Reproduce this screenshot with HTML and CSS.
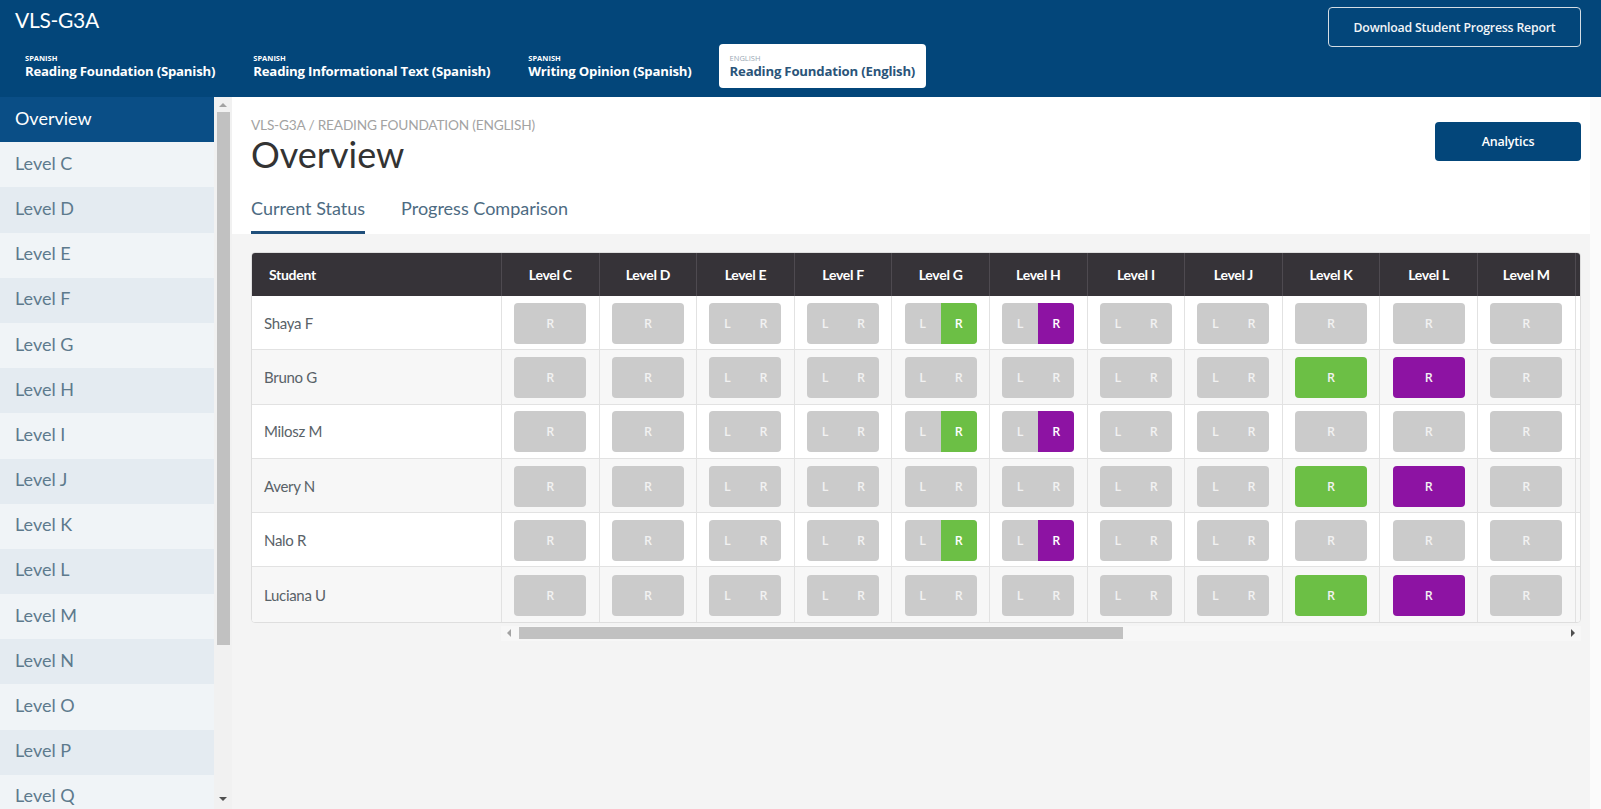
FILE: index.html
```html
<!DOCTYPE html>
<html lang="en">
<head>
<meta charset="utf-8">
<title>VLS-G3A Overview</title>
<link rel="stylesheet" href="styles.css">
</head>
<body>
<header class="topbar">
  <div class="topbar-left">
    <div class="app-title">VLS-G3A</div>
    <nav class="course-tabs">
      <a class="course-tab"><span class="lang">SPANISH</span><span class="course">Reading Foundation (Spanish)</span></a>
      <a class="course-tab"><span class="lang">SPANISH</span><span class="course">Reading Informational Text (Spanish)</span></a>
      <a class="course-tab"><span class="lang">SPANISH</span><span class="course">Writing Opinion (Spanish)</span></a>
      <a class="course-tab active"><span class="lang">ENGLISH</span><span class="course">Reading Foundation (English)</span></a>
    </nav>
  </div>
  <button class="btn-outline">Download Student Progress Report</button>
</header>

<div class="layout">
  <aside class="sidebar">
    <ul class="side-list">
      <li class="side-item active">Overview</li>
      <li class="side-item">Level C</li>
      <li class="side-item alt">Level D</li>
      <li class="side-item">Level E</li>
      <li class="side-item alt">Level F</li>
      <li class="side-item">Level G</li>
      <li class="side-item alt">Level H</li>
      <li class="side-item">Level I</li>
      <li class="side-item alt">Level J</li>
      <li class="side-item">Level K</li>
      <li class="side-item alt">Level L</li>
      <li class="side-item">Level M</li>
      <li class="side-item alt">Level N</li>
      <li class="side-item">Level O</li>
      <li class="side-item alt">Level P</li>
      <li class="side-item">Level Q</li>
    </ul>
  </aside>
  <div class="vscroll">
    <span class="arrow-up"></span>
    <span class="vthumb"></span>
    <span class="vspacer"></span>
    <span class="arrow-down"></span>
  </div>

  <main class="main">
    <section class="main-head">
      <div class="head-text">
        <div class="breadcrumb">VLS-G3A / READING FOUNDATION (ENGLISH)</div>
        <h1 class="page-title">Overview</h1>
        <div class="view-tabs">
          <span class="view-tab active">Current Status</span>
          <span class="view-tab">Progress Comparison</span>
        </div>
      </div>
      <button class="btn-primary">Analytics</button>
    </section>

    <section class="content">
      <div class="table-wrap">
        <div class="grid">
          <div class="row head">
            <div class="hcell student">Student</div>
            <div class="hcell">Level C</div>
            <div class="hcell">Level D</div>
            <div class="hcell">Level E</div>
            <div class="hcell">Level F</div>
            <div class="hcell">Level G</div>
            <div class="hcell">Level H</div>
            <div class="hcell">Level I</div>
            <div class="hcell">Level J</div>
            <div class="hcell">Level K</div>
            <div class="hcell">Level L</div>
            <div class="hcell">Level M</div>
            <div class="hcell"></div>
          </div>

          <div class="row">
            <div class="cell name">Shaya F</div>
            <div class="cell"><span class="pill"><i>R</i></span></div>
            <div class="cell"><span class="pill"><i>R</i></span></div>
            <div class="cell"><span class="pill"><i>L</i><i>R</i></span></div>
            <div class="cell"><span class="pill"><i>L</i><i>R</i></span></div>
            <div class="cell"><span class="pill"><i>L</i><i class="green">R</i></span></div>
            <div class="cell"><span class="pill"><i>L</i><i class="purple">R</i></span></div>
            <div class="cell"><span class="pill"><i>L</i><i>R</i></span></div>
            <div class="cell"><span class="pill"><i>L</i><i>R</i></span></div>
            <div class="cell"><span class="pill"><i>R</i></span></div>
            <div class="cell"><span class="pill"><i>R</i></span></div>
            <div class="cell"><span class="pill"><i>R</i></span></div>
            <div class="cell"><span class="pill"></span></div>
          </div>

          <div class="row even">
            <div class="cell name">Bruno G</div>
            <div class="cell"><span class="pill"><i>R</i></span></div>
            <div class="cell"><span class="pill"><i>R</i></span></div>
            <div class="cell"><span class="pill"><i>L</i><i>R</i></span></div>
            <div class="cell"><span class="pill"><i>L</i><i>R</i></span></div>
            <div class="cell"><span class="pill"><i>L</i><i>R</i></span></div>
            <div class="cell"><span class="pill"><i>L</i><i>R</i></span></div>
            <div class="cell"><span class="pill"><i>L</i><i>R</i></span></div>
            <div class="cell"><span class="pill"><i>L</i><i>R</i></span></div>
            <div class="cell"><span class="pill green"><i>R</i></span></div>
            <div class="cell"><span class="pill purple"><i>R</i></span></div>
            <div class="cell"><span class="pill"><i>R</i></span></div>
            <div class="cell"><span class="pill"></span></div>
          </div>

          <div class="row">
            <div class="cell name">Milosz M</div>
            <div class="cell"><span class="pill"><i>R</i></span></div>
            <div class="cell"><span class="pill"><i>R</i></span></div>
            <div class="cell"><span class="pill"><i>L</i><i>R</i></span></div>
            <div class="cell"><span class="pill"><i>L</i><i>R</i></span></div>
            <div class="cell"><span class="pill"><i>L</i><i class="green">R</i></span></div>
            <div class="cell"><span class="pill"><i>L</i><i class="purple">R</i></span></div>
            <div class="cell"><span class="pill"><i>L</i><i>R</i></span></div>
            <div class="cell"><span class="pill"><i>L</i><i>R</i></span></div>
            <div class="cell"><span class="pill"><i>R</i></span></div>
            <div class="cell"><span class="pill"><i>R</i></span></div>
            <div class="cell"><span class="pill"><i>R</i></span></div>
            <div class="cell"><span class="pill"></span></div>
          </div>

          <div class="row even">
            <div class="cell name">Avery N</div>
            <div class="cell"><span class="pill"><i>R</i></span></div>
            <div class="cell"><span class="pill"><i>R</i></span></div>
            <div class="cell"><span class="pill"><i>L</i><i>R</i></span></div>
            <div class="cell"><span class="pill"><i>L</i><i>R</i></span></div>
            <div class="cell"><span class="pill"><i>L</i><i>R</i></span></div>
            <div class="cell"><span class="pill"><i>L</i><i>R</i></span></div>
            <div class="cell"><span class="pill"><i>L</i><i>R</i></span></div>
            <div class="cell"><span class="pill"><i>L</i><i>R</i></span></div>
            <div class="cell"><span class="pill green"><i>R</i></span></div>
            <div class="cell"><span class="pill purple"><i>R</i></span></div>
            <div class="cell"><span class="pill"><i>R</i></span></div>
            <div class="cell"><span class="pill"></span></div>
          </div>

          <div class="row">
            <div class="cell name">Nalo R</div>
            <div class="cell"><span class="pill"><i>R</i></span></div>
            <div class="cell"><span class="pill"><i>R</i></span></div>
            <div class="cell"><span class="pill"><i>L</i><i>R</i></span></div>
            <div class="cell"><span class="pill"><i>L</i><i>R</i></span></div>
            <div class="cell"><span class="pill"><i>L</i><i class="green">R</i></span></div>
            <div class="cell"><span class="pill"><i>L</i><i class="purple">R</i></span></div>
            <div class="cell"><span class="pill"><i>L</i><i>R</i></span></div>
            <div class="cell"><span class="pill"><i>L</i><i>R</i></span></div>
            <div class="cell"><span class="pill"><i>R</i></span></div>
            <div class="cell"><span class="pill"><i>R</i></span></div>
            <div class="cell"><span class="pill"><i>R</i></span></div>
            <div class="cell"><span class="pill"></span></div>
          </div>

          <div class="row even last">
            <div class="cell name">Luciana U</div>
            <div class="cell"><span class="pill"><i>R</i></span></div>
            <div class="cell"><span class="pill"><i>R</i></span></div>
            <div class="cell"><span class="pill"><i>L</i><i>R</i></span></div>
            <div class="cell"><span class="pill"><i>L</i><i>R</i></span></div>
            <div class="cell"><span class="pill"><i>L</i><i>R</i></span></div>
            <div class="cell"><span class="pill"><i>L</i><i>R</i></span></div>
            <div class="cell"><span class="pill"><i>L</i><i>R</i></span></div>
            <div class="cell"><span class="pill"><i>L</i><i>R</i></span></div>
            <div class="cell"><span class="pill green"><i>R</i></span></div>
            <div class="cell"><span class="pill purple"><i>R</i></span></div>
            <div class="cell"><span class="pill"><i>R</i></span></div>
            <div class="cell"><span class="pill"></span></div>
          </div>
        </div>
      </div>
      <div class="hscroll">
        <span class="arrow-left"></span>
        <span class="htrack"><span class="hthumb"></span></span>
        <span class="arrow-right"></span>
      </div>
    </section>
  </main>
  <div class="gutter"></div>
</div>
</body>
</html>
```

FILE: styles.css
```css
* { box-sizing: border-box; }

html, body {
  margin: 0;
  padding: 0;
  width: 1601px;
  height: 809px;
  overflow: hidden;
  font-family: "Lato", "Open Sans", sans-serif;
  background: #ffffff;
}

/* ---------- top bar ---------- */
.topbar {
  height: 97px;
  background: #03467a;
  display: flex;
  justify-content: space-between;
  align-items: flex-start;
  padding: 0 20px 0 0;
}
.topbar-left {
  display: flex;
  flex-direction: column;
}
.app-title {
  color: #ffffff;
  font-size: 21px;
  line-height: 26px;
  padding: 7px 0 0 15px;
  letter-spacing: -0.3px;
  height: 44px;
}
.course-tabs {
  display: flex;
  gap: 16px;
  padding-left: 14px;
}
.course-tab {
  height: 44px;
  padding: 0 11px;
  display: flex;
  flex-direction: column;
  justify-content: center;
  color: #ffffff;
  border-radius: 4px;
  font-family: "Open Sans", "Lato", sans-serif;
}
.course-tab .lang {
  font-size: 7.5px;
  line-height: 9px;
  font-weight: 700;
}
.course-tab .course {
  font-size: 13.2px;
  line-height: 16px;
  font-weight: 700;
  letter-spacing: -0.2px;
}
.course-tab.active {
  background: #ffffff;
  color: #2a5479;
}
.course-tab.active .lang {
  color: #9aa8b4;
  font-weight: 400;
}

.btn-outline {
  margin-top: 7px;
  width: 253px;
  height: 40px;
  background: transparent;
  color: #f2f5f8;
  border: 1px solid #d5dde4;
  border-radius: 4px;
  font-family: "Open Sans", "Lato", sans-serif;
  font-size: 12.3px;
  font-weight: 600;
  letter-spacing: -0.2px;
}

/* ---------- layout ---------- */
.layout {
  display: flex;
  height: 712px;
}

.sidebar {
  width: 214px;
  flex-shrink: 0;
  overflow: hidden;
  background: #eef3f7;
}
.side-list {
  list-style: none;
  margin: 0;
  padding: 0;
}
.side-item {
  height: 45.2px;
  padding-left: 15px;
  padding-bottom: 4px;
  display: flex;
  align-items: center;
  font-size: 18px;
  color: #5d7a8d;
  background: #f0f4f7;
}
.side-item.alt { background: #e4ebf1; }
.side-item.active {
  background: #0a4e86;
  color: #ffffff;
}

.vscroll {
  width: 18px;
  flex-shrink: 0;
  background: #f1f1f1;
  display: flex;
  flex-direction: column;
  align-items: center;
  padding: 6px 0 8px;
}
.arrow-up {
  width: 0; height: 0;
  border-left: 4px solid transparent;
  border-right: 4px solid transparent;
  border-bottom: 4px solid #a3a3a3;
  margin-bottom: 5px;
}
.vthumb {
  width: 13px;
  height: 533px;
  background: #c1c1c1;
}
.vspacer { flex: 1; }
.arrow-down {
  width: 0; height: 0;
  border-left: 4px solid transparent;
  border-right: 4px solid transparent;
  border-top: 4px solid #505050;
}

.main {
  flex: 1;
  min-width: 0;
  background: #f4f4f4;
  display: flex;
  flex-direction: column;
}
.gutter {
  width: 11px;
  flex-shrink: 0;
  background: #fbfbfb;
}

/* ---------- main head ---------- */
.main-head {
  background: #ffffff;
  display: flex;
  justify-content: space-between;
  align-items: flex-start;
  padding: 21px 9px 0 19px;
}
.breadcrumb {
  font-size: 13.7px;
  line-height: 14px;
  color: #a3a3a3;
  letter-spacing: -0.2px;
}
.page-title {
  margin: 2px 0 0;
  font-size: 36px;
  line-height: 40px;
  font-weight: 400;
  color: #333333;
}
.view-tabs {
  display: flex;
  gap: 36px;
  margin-top: 24px;
}
.view-tab {
  font-size: 18px;
  line-height: 20px;
  color: #4d6b82;
  padding-bottom: 13px;
  border-bottom: 3px solid transparent;
}
.view-tab.active {
  border-bottom-color: #1f4f7b;
}
.btn-primary {
  margin-top: 4px;
  width: 146px;
  height: 39px;
  border: 0;
  border-radius: 4px;
  background: #03467a;
  color: #ffffff;
  font-family: "Open Sans", "Lato", sans-serif;
  font-size: 12.5px;
  font-weight: 600;
  letter-spacing: -0.2px;
}

/* ---------- table ---------- */
.content {
  padding: 18px 9px 0 19px;
}
.table-wrap {
  border: 1px solid #dedede;
  border-radius: 4px;
  overflow: hidden;
  background: #ffffff;
}
.grid {
  display: grid;
  grid-template-columns: 250px repeat(12, 97.6px);
  grid-template-rows: 43px repeat(6, 54.3px);
  width: max-content;
}
.row { display: contents; }

.hcell {
  background: #363338;
  color: #ffffff;
  font-size: 14px;
  font-weight: 700;
  display: flex;
  align-items: center;
  justify-content: center;
  border-right: 1px solid #4e4a50;
  letter-spacing: -0.3px;
}
.hcell.student {
  justify-content: flex-start;
  padding-left: 17px;
}

.cell {
  background: #ffffff;
  border-right: 1px solid #e2e2e2;
  border-bottom: 1px solid #e2e2e2;
  display: flex;
  align-items: center;
  justify-content: center;
}
.row.even .cell { background: #f7f7f7; }
.row.last .cell { border-bottom: 0; }
.cell.name {
  justify-content: flex-start;
  padding-left: 12px;
  font-size: 15px;
  color: #596268;
  letter-spacing: -0.3px;
}

.pill {
  width: 72px;
  height: 41px;
  border-radius: 4px;
  background: #cbcbcb;
  display: flex;
  overflow: hidden;
  margin-top: 1px;
}
.pill i {
  flex: 1;
  font-style: normal;
  color: #f2f2f2;
  font-family: "Open Sans", "Lato", sans-serif;
  font-size: 12.5px;
  font-weight: 600;
  display: flex;
  align-items: center;
  justify-content: center;
}
.pill.green, .pill i.green { background: #6cbf45; color: #ffffff; }
.pill.purple, .pill i.purple { background: #8d13a3; color: #ffffff; }

/* ---------- horizontal scrollbar ---------- */
.hscroll {
  margin: 3px 0 0 250px;
  height: 15px;
  display: flex;
  align-items: center;
  background: #f7f7f7;
}
.arrow-left, .arrow-right {
  width: 0; height: 0;
  border-top: 4px solid transparent;
  border-bottom: 4px solid transparent;
}
.arrow-left {
  border-right: 4px solid #a3a3a3;
  margin: 0 8px 0 6px;
}
.arrow-right {
  border-left: 4px solid #505050;
  margin: 0 6px 0 8px;
}
.htrack {
  flex: 1;
  display: flex;
}
.hthumb {
  width: 604px;
  height: 12px;
  background: #c1c1c1;
}
```
